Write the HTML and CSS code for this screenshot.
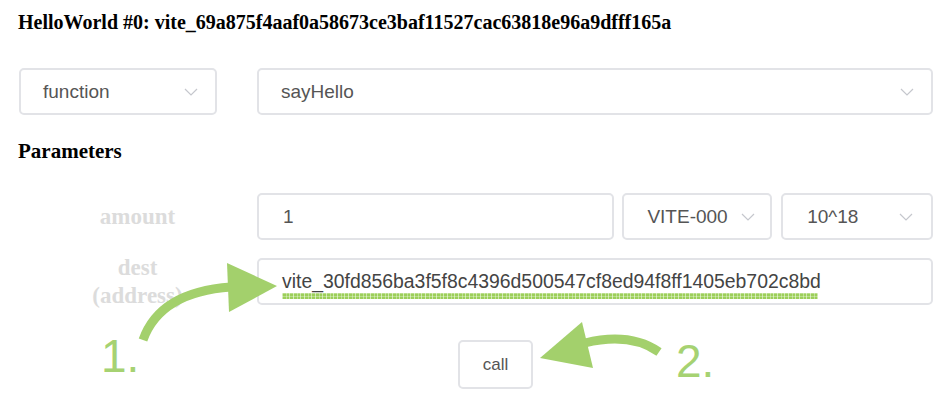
FILE: index.html
```html
<!DOCTYPE html>
<html>
<head>
<meta charset="utf-8">
<link rel="stylesheet" href="styles.css">
</head>
<body>
<div class="page">
  <h1 class="title">HelloWorld #0: vite_69a875f4aaf0a58673ce3baf11527cac63818e96a9dfff165a</h1>
  <div class="top-row">
    <div class="select sel-type"><span>function</span><svg class="chev" viewBox="0 0 14 8"><path d="M1 1 L7 7 L13 1"/></svg></div>
    <div class="select sel-fn"><span>sayHello</span><svg class="chev" viewBox="0 0 14 8"><path d="M1 1 L7 7 L13 1"/></svg></div>
  </div>
  <h2 class="params-title">Parameters</h2>
  <div class="params">
    <div class="param-row">
      <div class="label">amount</div>
      <div class="fields">
        <div class="input amount-input">1</div>
        <div class="select sel-token"><span>VITE-000</span><svg class="chev" viewBox="0 0 14 8"><path d="M1 1 L7 7 L13 1"/></svg></div>
        <div class="select sel-unit"><span>10^18</span><svg class="chev" viewBox="0 0 14 8"><path d="M1 1 L7 7 L13 1"/></svg></div>
      </div>
    </div>
    <div class="param-row">
      <div class="label">dest<br>(address)</div>
      <div class="fields">
        <div class="input dest-input">vite_30fd856ba3f5f8c4396d500547cf8ed94f8ff1405eb702c8bd</div>
      </div>
    </div>
  </div>
  <div class="call-row">
    <button class="call-btn">call</button>
  </div>
</div>
<div class="squiggle"></div>
<svg class="annot" viewBox="0 0 950 402" width="950" height="402">
  <path class="shaft" d="M143 340 Q160 292 231 287"/>
  <polygon class="head" points="227,263 277,286 229,312"/>
  <path class="shaft" d="M585 343 Q630 332 659 352"/>
  <polygon class="head" points="540,358 582,322 593,368"/>
</svg>
<div class="num num1">1.</div>
<div class="num num2">2.</div>
</body>
</html>
```
FILE: styles.css
```css
html, body {
  margin: 0;
  padding: 0;
  background: #fff;
}
body {
  font-family: "Liberation Serif", "Times New Roman", serif;
  width: 950px;
  height: 402px;
  position: relative;
  overflow: hidden;
}
.page {
  padding: 11px 17px 0 18px;
}
.title {
  margin: 0;
  font-size: 20px;
  line-height: 23px;
  font-weight: bold;
  color: #000;
}
.top-row {
  display: flex;
  gap: 40px;
  margin-top: 34px;
  margin-left: 1px;
}
.select, .input {
  box-sizing: border-box;
  height: 47px;
  border: 2px solid #e2e3e7;
  border-radius: 5px;
  display: flex;
  align-items: center;
  font-family: "Liberation Sans", Arial, sans-serif;
  font-size: 19px;
  color: #555;
  background: #fff;
}
.select {
  justify-content: space-between;
  padding: 0 17px 0 22px;
}
.chev {
  width: 14px;
  height: 8px;
  flex: none;
}
.chev path {
  fill: none;
  stroke: #c5c7cd;
  stroke-width: 1.2;
}
.sel-type { width: 198px; }
.sel-fn { width: 676px; }
.params-title {
  margin: 24px 0 0 0;
  font-size: 21px;
  line-height: 24px;
  font-weight: bold;
  color: #000;
}
.params {
  margin-top: 30px;
  display: flex;
  flex-direction: column;
  gap: 18px;
}
.param-row {
  display: flex;
  align-items: center;
  height: 47px;
}
.label {
  width: 239px;
  flex: none;
  text-align: center;
  font-size: 23px;
  line-height: 28px;
  font-weight: bold;
  color: #dcdcdc;
}
.fields {
  display: flex;
  gap: 8px;
  width: 676px;
}
.input {
  padding: 0 22px 0 24px;
}
.amount-input { width: 358px; }
.sel-token { width: 150px; padding: 0 15px 0 23px; }
.sel-unit { width: 152px; margin-left: 1px; padding: 0 18px 0 24px; }
.dest-input { width: 676px; padding-left: 23px; color: #444; font-size: 19.4px; }
.call-row {
  margin-top: 35px;
  padding-left: 440px;
}
.call-btn {
  box-sizing: border-box;
  width: 75px;
  height: 49px;
  border: 2px solid #e2e3e7;
  border-radius: 5px;
  background: #fff;
  font-family: "Liberation Sans", Arial, sans-serif;
  font-size: 17px;
  color: #555;
  padding: 0;
}
.squiggle {
  position: absolute;
  left: 282px;
  top: 293px;
  width: 536px;
  height: 6px;
  background:
    repeating-linear-gradient(90deg, rgba(255,255,255,0.55) 0 1px, transparent 1px 4px, rgba(255,255,255,0.35) 4px 5px, transparent 5px 7px, rgba(255,255,255,0.5) 7px 8px, transparent 8px 11px),
    repeating-linear-gradient(0deg, #9ccf5a 0 2px, #b9de8a 2px 3px);
}
.annot {
  position: absolute;
  left: 0;
  top: 0;
  pointer-events: none;
}
.shaft {
  fill: none;
  stroke: #a3d06c;
  stroke-width: 9;
}
.head {
  fill: #a3d06c;
}
.num {
  position: absolute;
  font-family: "Liberation Sans", Arial, sans-serif;
  font-size: 46px;
  line-height: 46px;
  color: #a6d272;
}
.num1 { left: 101px; top: 333px; }
.num2 { left: 676px; top: 338px; }
```
